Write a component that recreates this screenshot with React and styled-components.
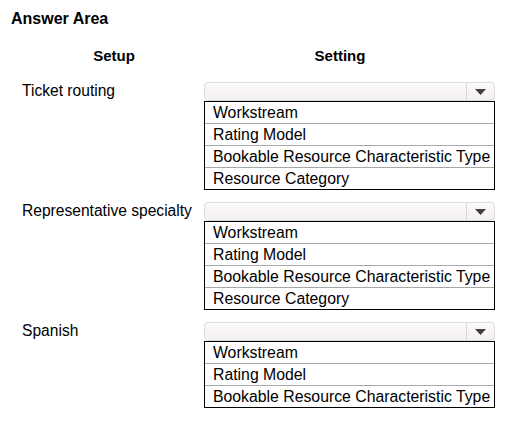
import React from "react";
import styled, { createGlobalStyle } from "styled-components";

const GlobalStyle = createGlobalStyle`
  body {
    margin: 0;
    background: #fff;
  }
`;

const Page = styled.div`
  width: 529px;
  height: 442px;
  box-sizing: border-box;
  padding: 9px 0 0 11px;
  font-family: "Liberation Sans", Arial, sans-serif;
  color: #000;
  overflow: hidden;
`;

const Title = styled.h1`
  margin: 0;
  font-size: 16px;
  font-weight: bold;
  line-height: 20px;
`;

const Grid = styled.div`
  display: grid;
  grid-template-columns: 193px 291px;
  margin-top: 17px;
`;

const HeadCell = styled.div`
  font-size: 15px;
  font-weight: bold;
  line-height: 20px;
  text-align: center;
  width: ${(p) => p.$width}px;
  margin-bottom: 16px;
`;

const Label = styled.div`
  font-size: 15.6px;
  line-height: 17px;
  padding-left: 11px;
  white-space: nowrap;
`;

const Setting = styled.div`
  display: flex;
  flex-direction: column;
  margin-bottom: 12px;
`;

const Select = styled.div`
  display: flex;
  height: 19px;
  box-sizing: border-box;
  border: 1px solid #dcdcdc;
  border-radius: 4px;
  background: linear-gradient(#fcf9f9, #f5f0f0);
  .value {
    flex: 1;
  }
  .arrow {
    width: 27px;
    border-left: 1px solid #d6d6d6;
    display: flex;
    align-items: center;
    justify-content: center;
  }
`;

const Options = styled.ul`
  list-style: none;
  margin: 0;
  padding: 0;
  border: 1px solid #000;
  width: 291px;
  box-sizing: border-box;
`;

const Option = styled.li`
  height: 21px;
  line-height: 21px;
  font-size: 15.8px;
  padding-left: 8px;
  white-space: nowrap;
  & + & {
    border-top: 1px solid #a8a8a8;
  }
`;

const Arrow = () => (
  <svg width="11" height="6" viewBox="0 0 11 6">
    <path d="M0 0 H11 L5.5 6 Z" fill="#3f3f3f" />
  </svg>
);

const rows = [
  {
    label: "Ticket routing",
    options: ["Workstream", "Rating Model", "Bookable Resource Characteristic Type", "Resource Category"],
  },
  {
    label: "Representative specialty",
    options: ["Workstream", "Rating Model", "Bookable Resource Characteristic Type", "Resource Category"],
  },
  {
    label: "Spanish",
    options: ["Workstream", "Rating Model", "Bookable Resource Characteristic Type"],
  },
];

export default function App() {
  return (
    <Page>
      <GlobalStyle />
      <Title>Answer Area</Title>
      <Grid>
        <HeadCell $width={206}>Setup</HeadCell>
        <HeadCell $width={272}>Setting</HeadCell>
        {rows.map((row) => (
          <React.Fragment key={row.label}>
            <Label>{row.label}</Label>
            <Setting>
              <Select>
                <div className="value" />
                <div className="arrow">
                  <Arrow />
                </div>
              </Select>
              <Options>
                {row.options.map((o) => (
                  <Option key={o}>{o}</Option>
                ))}
              </Options>
            </Setting>
          </React.Fragment>
        ))}
      </Grid>
    </Page>
  );
}
